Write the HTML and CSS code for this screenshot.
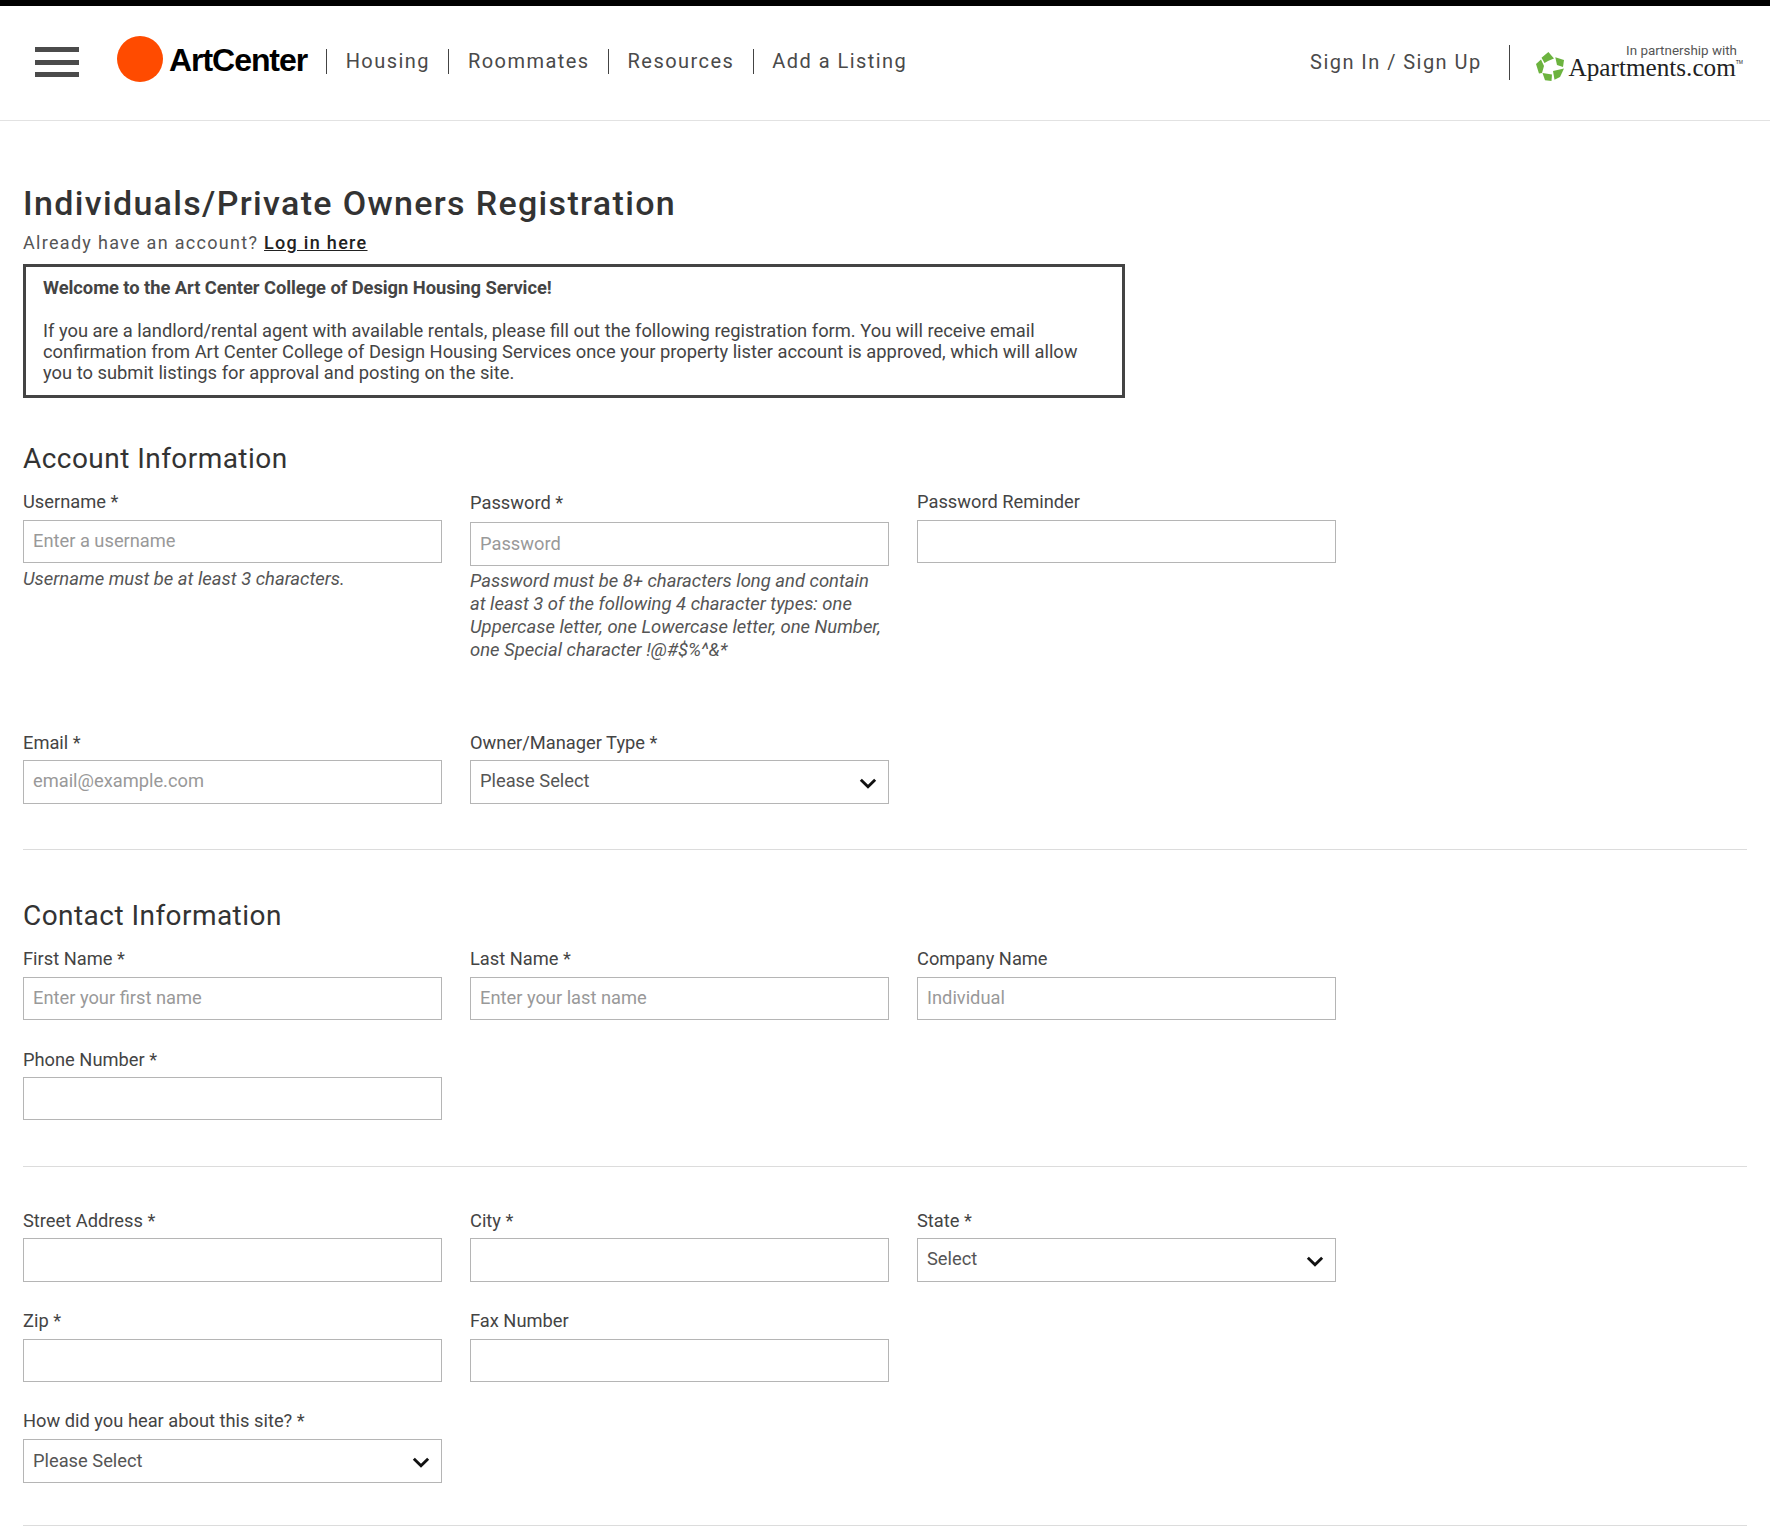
FILE: index.html
```html
<!DOCTYPE html>
<html lang="en">
<head>
<meta charset="utf-8">
<title>Individuals/Private Owners Registration</title>
<link rel="stylesheet" href="styles.css">
</head>
<body>
<header class="site-header">
  <button class="burger" aria-label="Menu"><span></span><span></span><span></span></button>
  <a class="brand"><span class="brand-dot"></span><span class="brand-name">ArtCenter</span></a>
  <nav class="main-nav">
    <a>Housing</a><a>Roommates</a><a>Resources</a><a>Add a Listing</a>
  </nav>
  <div class="header-right">
    <a class="sign">Sign In / Sign Up</a>
    <div class="partner">
      <svg class="partner-icon" viewBox="0 0 28 29" aria-hidden="true">
        <g fill="#6cb33f">
          <polygon points="5.5,5.8 12.4,0 18,6.5 12,9 8.5,11"/>
          <polygon points="19.3,5.2 28,7.9 27,15 21,13"/>
          <polygon points="17,19 28,16.5 24,25 18.5,27.8"/>
          <polygon points="6.5,21 16,22.5 15.5,29 9,28.3"/>
          <polygon points="0,12 5,7.5 8,14 6,21 3,21.5"/>
        </g>
      </svg>
      <div class="partner-text">
        <span class="partner-line">In partnership with</span>
        <span class="partner-name">Apartments.com<sup>TM</sup></span>
      </div>
    </div>
  </div>
</header>
<main class="page">
  <h1>Individuals/Private Owners Registration</h1>
  <p class="have-account">Already have an account? <a>Log in here</a></p>
  <section class="welcome">
    <strong>Welcome to the Art Center College of Design Housing Service!</strong>
    <p>If you are a landlord/rental agent with available rentals, please fill out the following registration form. You will receive email confirmation from Art Center College of Design Housing Services once your property lister account is approved, which will allow you to submit listings for approval and posting on the site.</p>
  </section>

  <h2 class="h-account">Account Information</h2>
  <div class="form-row row-account">
    <div class="field"><label>Username *</label><input placeholder="Enter a username"><p class="help help-short">Username must be at least 3 characters.</p></div>
    <div class="field field-pw"><label>Password *</label><input class="tall" placeholder="Password"><p class="help">Password must be 8+ characters long and contain at least 3 of the following 4 character types: one Uppercase letter, one Lowercase letter, one Number, one Special character !@#$%^&amp;*</p></div>
    <div class="field"><label>Password Reminder</label><input></div>
  </div>
  <div class="form-row row-email">
    <div class="field"><label>Email *</label><input class="tall" placeholder="email@example.com"></div>
    <div class="field"><label>Owner/Manager Type *</label>
      <div class="select-wrap"><select><option>Please Select</option></select><svg class="chev" viewBox="0 0 16 10"><polyline points="1.5,1.5 8,8 14.5,1.5"/></svg></div>
    </div>
  </div>
  <hr class="hr-1">

  <h2 class="h-contact">Contact Information</h2>
  <div class="form-row row-contact">
    <div class="field"><label>First Name *</label><input placeholder="Enter your first name"></div>
    <div class="field"><label>Last Name *</label><input placeholder="Enter your last name"></div>
    <div class="field"><label>Company Name</label><input placeholder="Individual"></div>
  </div>
  <div class="form-row row-phone">
    <div class="field"><label>Phone Number *</label><input></div>
  </div>
  <hr class="hr-2">

  <div class="form-row row-street">
    <div class="field"><label>Street Address *</label><input class="tall"></div>
    <div class="field"><label>City *</label><input class="tall"></div>
    <div class="field"><label>State *</label>
      <div class="select-wrap"><select><option>Select</option></select><svg class="chev" viewBox="0 0 16 10"><polyline points="1.5,1.5 8,8 14.5,1.5"/></svg></div>
    </div>
  </div>
  <div class="form-row row-zip">
    <div class="field"><label>Zip *</label><input></div>
    <div class="field"><label>Fax Number</label><input></div>
  </div>
  <div class="form-row row-how">
    <div class="field"><label>How did you hear about this site? *</label>
      <div class="select-wrap"><select><option>Please Select</option></select><svg class="chev" viewBox="0 0 16 10"><polyline points="1.5,1.5 8,8 14.5,1.5"/></svg></div>
    </div>
  </div>
  <hr class="hr-3">
</main>
</body>
</html>
```
FILE: styles.css
```css
* { box-sizing: border-box; }
html, body { margin: 0; padding: 0; background: #fff; }
body { font-family: Roboto, "Liberation Sans", sans-serif; color: #333; font-size: 18px; }

.site-header {
  display: flex;
  align-items: center;
  height: 121px;
  border-top: 6px solid #000;
  border-bottom: 1px solid #e2e2e2;
  padding: 0 27px 2px 35px;
}
.burger {
  display: flex;
  flex-direction: column;
  justify-content: space-between;
  width: 44px;
  height: 30px;
  padding: 0;
  border: 0;
  background: none;
  margin-right: 38px;
}
.burger span { display: block; height: 5px; background: #4b4b4b; }
.brand { display: flex; align-items: center; margin-top: -3px; }
.brand-dot { width: 46px; height: 46px; border-radius: 50%; background: #ff4b00; margin-bottom: 3px; }
.brand-name {
  font-family: "Liberation Sans", Arial, sans-serif;
  font-weight: 700;
  font-size: 32px;
  letter-spacing: -1.05px;
  color: #000;
  margin-left: 6px;
}
.main-nav { display: flex; align-items: center; margin: -1px 0 0 19px; }
.main-nav a {
  display: block;
  border-left: 1px solid #444;
  height: 25px;
  line-height: 24px;
  padding: 0 18.5px;
  font-size: 20px;
  letter-spacing: 1.45px;
  color: #4a4a4a;
  white-space: nowrap;
}
.header-right { display: flex; align-items: center; margin-left: auto; }
.sign { font-size: 20px; letter-spacing: 1.45px; color: #4a4a4a; white-space: nowrap; }
.partner {
  display: flex;
  align-items: flex-end;
  border-left: 1px solid #444;
  margin-left: 27px;
  padding-left: 26px;
  height: 35px;
}
.partner-icon { width: 28px; height: 29px; margin-bottom: -1px; }
.partner-text { display: flex; flex-direction: column; align-items: flex-end; margin: -6px 0 0.5px 5px; }
.partner-line { font-size: 13.4px; line-height: 11px; color: #555; margin: 0 6px 1px 0; }
.partner-name {
  font-family: "Liberation Serif", serif;
  font-size: 25.2px;
  line-height: 22px;
  color: #222;
}
.partner-name sup { font-size: 5px; font-family: "Liberation Sans", sans-serif; vertical-align: 12px; line-height: 0; }

.page { padding: 0 23px; }
h1 {
  margin: 61px 0 0;
  font-size: 34px;
  line-height: 42px;
  font-weight: 500;
  letter-spacing: 1.33px;
  color: #333;
}
.have-account { margin: 7px 0 0; font-size: 18px; line-height: 24px; letter-spacing: 1.3px; color: #555; }
.have-account a { color: #222; font-weight: 500; text-decoration: underline; }
.welcome {
  margin-top: 9px;
  width: 1102px;
  height: 134px;
  border: 3px solid #444;
  padding: 10px 17px;
  font-size: 18.33px;
  line-height: 21.2px;
  color: #444;
}
.welcome strong { display: block; font-weight: 700; letter-spacing: -0.05px; }
.welcome p { margin: 21.4px 0 0; }

h2 {
  margin: 0;
  font-size: 28px;
  line-height: 34px;
  font-weight: 400;
  letter-spacing: 0.45px;
  color: #333;
}
.h-account { margin-top: 44px; }
.h-contact { margin-top: 49px; }

.form-row { display: grid; grid-template-columns: repeat(3, 419px); column-gap: 28px; }
.row-account { margin-top: 14px; }
.row-email { margin-top: 69px; }
.row-contact { margin-top: 14px; }
.row-phone { margin-top: 28px; }
.row-zip { margin-top: 27px; }
.row-how { margin-top: 27px; }
.field-pw { padding-top: 1px; }
.field label { display: block; height: 30px; line-height: 24px; font-size: 18.3px; color: #444; }
.field-pw label { height: 31px; }
.row-email label, .row-phone label, .row-street label { height: 29px; }
.field input, .field select {
  display: block;
  width: 100%;
  height: 43px;
  border: 1px solid #b5b5b5;
  border-radius: 0;
  background: #fff;
  padding: 0 9px 2px;
  font-family: inherit;
  font-size: 18.3px;
  color: #555;
  outline: 0;
  appearance: none;
}
.field input.tall, .field select { height: 44px; }
.row-email input.tall, .row-email select, .row-street select { padding-bottom: 4px; }
.field input::placeholder { color: #999; opacity: 1; }
.select-wrap { position: relative; }
.chev {
  position: absolute;
  right: 12px;
  top: 18px;
  width: 18px;
  height: 11px;
  fill: none;
  stroke: #111;
  stroke-width: 2.6;
  pointer-events: none;
}
.help { margin: 4px 0 0; padding-right: 4px; font-size: 18.45px; line-height: 23px; font-style: italic; color: #555; }
.help-short { margin-top: 5px; }

hr { height: 1px; border: 0; margin: 0; background: #dcdcdc; }
.hr-1 { margin-top: 45px; }
.hr-2 { margin-top: 46px; margin-bottom: 42px; }
.hr-3 { margin-top: 42px; }
```
